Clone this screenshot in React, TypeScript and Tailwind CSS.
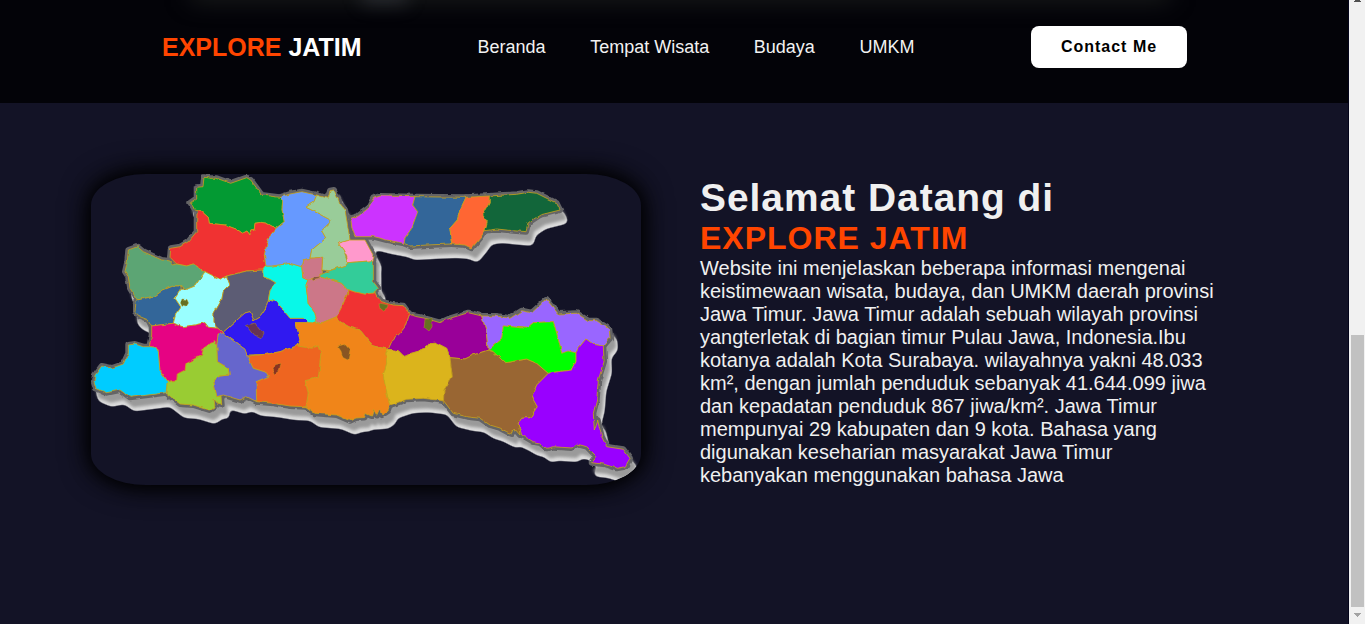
import React from "react";

type Region = { name: string; fill: string; points: string };

const regions: Region[] = [
  { name: "Tuban", fill: "#039a33", points: "190.3,202.7 196.7,198.3 196.7,187.3 203,186.7 204,177.3 210,178.3 216.7,178.3 230.7,183.3 246.7,177.7 250.7,180 261.7,195 279.3,197.3 282.7,200.7 282,209.3 284.3,221.7 276,228.3 266.7,223.3 260.7,222.3 255,223.3 254.3,229.3 250.7,230 250,235 247,231 242.7,233.3 236.7,229.3 225,225 209.3,223.3 208.3,217.3 200.7,210.7 194.3,208.7" },
  { name: "Bojonegoro", fill: "#f03232", points: "200.7,210.7 208.3,217.3 209.3,223.3 225,225 236.7,229.3 242.7,233.3 247,231 250,235 250.7,230 254.3,229.3 255,223.3 260.7,222.3 266.7,223.3 276,228.3 268.3,238.3 264.3,255 266,266 262.7,270 246.7,271 226.7,276 220,279.3 205,271.7 193.3,264 186.7,266 176.7,264 170,257.3 170.7,248.3 180,246.7 188.3,241.7 196.7,231.7 196.7,220 197.3,209.7" },
  { name: "Ngawi", fill: "#5ca574", points: "128.3,250 137.3,246.7 143.3,251.7 161.7,260 170,261 173.3,265 176.7,264 186.7,266 193.3,264 205,271.7 195,286 186.7,289.3 181,286 173.3,286 163.3,290 155,296 137.3,300 130,288.3 128.3,276.7 125,271.7 127.3,261.7" },
  { name: "Magetan", fill: "#336699", points: "137.3,300 155,296 163.3,290 173.3,286 181,286 181,289.3 175,298.3 180.7,306.7 176,313.3 173.3,323.3 151.7,326 148.3,320 140,316.7 135,311.7 136,301.7" },
  { name: "Madiun", fill: "#99ffff", points: "205,271.7 220,279.3 226.7,276 230,285 223.3,291.7 221.7,300 214,313.3 214,321.7 216,326.7 218,328.3 208.3,327.3 205,322.7 195,325 183.3,326.7 173.3,323.3 176,313.3 180.7,306.7 175,298.3 181,289.3 186.7,289.3 195,286" },
  { name: "Nganjuk", fill: "#5c5c74", points: "226.7,276 246.7,271 262.7,270 263.3,276.7 270,279.3 275.7,282.7 270,290.7 268.3,300 265,310 260,317.3 254,320.7 250,311.7 245,313 222.7,332.7 218,328.3 216,326.7 214,321.7 214,313.3 221.7,300 223.3,291.7 230,285" },
  { name: "Kediri", fill: "#3019f0", points: "222.7,332.7 245,313 250,311.7 254,320.7 260,317.3 265,310 268.3,300 276.7,301.7 290,318.3 303.3,318.3 308.3,322.7 296,322.7 300,340 296.7,346 280,351.7 266.7,354.3 246.7,355 245,349.3 230,338.3" },
  { name: "Jombang", fill: "#08f8e8", points: "263.3,276.7 262.7,270 266,266 271.7,266 290,263.3 301.7,266.7 302.7,276.7 308.3,279.3 306,285 308.3,303.3 315,313.3 317.3,323.3 308.3,322.7 303.3,318.3 290,318.3 276.7,301.7 268.3,300 270,290.7 275.7,282.7 270,279.3" },
  { name: "Lamongan", fill: "#6699ff", points: "279.3,197.3 290,194 301.7,191.7 316.7,195 314,201.7 306,207.3 315,211.7 331.7,220.7 321.7,230.7 326,238.3 311.7,250 310,258.3 302.7,260 301.7,266.7 290,263.3 271.7,266 266,266 264.3,255 268.3,238.3 276,228.3 284.3,221.7 282,209.3 282.7,200.7" },
  { name: "Gresik", fill: "#99cc99", points: "316.7,195 320,196 328.3,198.3 330,190.7 334,190 340,203.3 345,210 347.3,223.3 350,240 338.3,243.3 343.3,250 347.7,262.7 346.7,265 330,270.7 321.7,270 322.7,257.3 310,258.3 311.7,250 326,238.3 321.7,230.7 331.7,220.7 315,211.7 306,207.3 314,201.7" },
  { name: "Surabaya", fill: "#ff99cc", points: "338.3,243.3 350,240 365,240 374,256.7 372.7,260.7 347.7,262.7 346.7,256.7 343.3,250" },
  { name: "Kota Mojokerto", fill: "#cc7788", points: "310,258.3 322.7,257.3 321.7,270 322.7,272 320,277.3 308.3,279.3 302.7,276.7 301.7,266.7 302.7,260" },
  { name: "Mojokerto", fill: "#cc7788", points: "306,285 308.3,279.3 320,277.3 330,279.3 341.7,283.3 347.7,290 347.7,293.3 342.7,305 336.7,316.7 323.3,322.3 317.3,323.3 315,313.3 308.3,303.3" },
  { name: "Sidoarjo", fill: "#33cc99", points: "320,275 330,270.7 346.7,265 347.7,262.7 372.7,260.7 373.3,263.3 373.3,281.7 378.3,288.3 375,292.7 365,294.3 347.7,290 341.7,283.3 330,279.3 320,277.3" },
  { name: "Pasuruan", fill: "#f03232", points: "347.7,290 365,294.3 375,292.7 376.7,296 381.7,301.7 393.3,305 403.3,305.7 409.3,314 405,326.7 400,333.3 391.7,341.7 388.3,349.3 373.3,346 366.7,338.3 360,330 350,327.3 340,321.7 336.7,316.7 342.7,305 347.7,293.3" },
  { name: "Malang", fill: "#f08519", points: "296,322.7 308.3,322.7 317.3,323.3 323.3,322.3 336.7,316.7 340,321.7 350,327.3 360,330 366.7,338.3 373.3,346 388.3,349.3 386,353.3 386.7,363.3 383.3,375 386,390 390,405 388,411 382,415 379.5,410 377,415.5 373.5,409.5 371.5,416 366,413.5 364.5,417.5 356,418 350,420.7 336.7,415 315,413.3 306,406.7 308.3,393.3 305,380.7 318.3,377.3 321,353.3 318.3,346 311.7,348.3 296.7,346 300,340" },
  { name: "Blitar", fill: "#ee6520", points: "296.7,346 311.7,348.3 318.3,346 321,353.3 318.3,377.3 305,380.7 308.3,393.3 306,406.7 290,406 273.3,403.3 256.7,401.7 256,381.7 269.3,376 267.3,372.7 253.3,368.3 247.3,356 266.7,354.3 280,351.7" },
  { name: "Tulungagung", fill: "#6666cc", points: "222.7,332.7 230,338.3 245,349.3 247.3,356 253.3,368.3 267.3,372.7 269.3,376 256,381.7 256.7,401.7 246.7,396.7 240,400 223.3,395 216.7,396.7 213.3,380 220,376 229,375 228.3,368.3 217.3,361.7 216.7,345 218,334" },
  { name: "Trenggalek", fill: "#99cc33", points: "213.3,341.7 216.7,345 217.3,361.7 228.3,368.3 229,375 220,376 213.3,380 216.7,396.7 221,396 221.7,405 217,404 213,399 214,407 209.3,410 193.3,405 180,404 170.7,396.7 166,392.7 167.3,381.7 176.7,380 177.3,374 185,370 186,363.3 201.7,355 203.3,348.3" },
  { name: "Ponorogo", fill: "#e60383", points: "151.7,326 173.3,323.3 183.3,326.7 195,325 205,322.7 208.3,327.3 218,328.3 222.7,332.7 218,334 216.7,345 213.3,341.7 203.3,348.3 201.7,355 186,363.3 185,370 177.3,374 176.7,380 167.3,381.7 160,371.7 158.3,351.7 156,347.3 149.3,346.7 151.7,335" },
  { name: "Pacitan", fill: "#00ccff", points: "95,375 101.7,366 112,368 123.3,364 128.3,353.3 128.3,345 135,344 143.3,346.7 149.3,346.7 156,347.3 158.3,351.7 160,371.7 167.3,381.7 166,392.7 148,395 130,397.3 120,390 106.7,392.7 96,388.3 94,381.7" },
  { name: "Bangkalan", fill: "#cc33ff", points: "350.7,218.3 358.3,216 368.3,208.3 373.3,198.3 380,196 415,196.7 412.7,205 417.7,211.7 411.7,228.3 405,238 404,243.3 386.7,240 373.3,236.7 355,236.7 352,228" },
  { name: "Sampang", fill: "#336699", points: "415,196.7 466,197.3 460,210 457.3,220 450,228.3 451.7,244 433,244.7 410,246 404,243.3 405,238 411.7,228.3 417.7,211.7 412.7,205" },
  { name: "Pamekasan", fill: "#ff6633", points: "466,197.3 489.3,196 489.3,203 482.7,215 487.3,221.7 485,230.7 480,238.3 471.7,248.3 465,245 451.7,244 450,228.3 457.3,220 460,210" },
  { name: "Sumenep", fill: "#12663a", points: "489.3,196 516.7,194.3 528.3,192.3 536.7,193.3 556.7,203.3 560,210 540,215 528.3,222.7 526,231.7 513.3,230.7 496.7,229 485,230.7 487.3,221.7 482.7,215 489.3,203" },
  { name: "Probolinggo", fill: "#990099", points: "409.3,314 413.3,316 425,318.3 440,322.7 450,318.3 468.3,312.7 481.7,316 486,330 488.3,350 473.3,355 465,359 450,357.7 446.7,348.3 435,342.3 430,342.7 425,349.3 403.3,355.7 398.3,350.7 388.3,349.3 391.7,341.7 400,333.3 405,326.7" },
  { name: "Lumajang", fill: "#dbb41c", points: "388.3,349.3 398.3,350.7 403.3,355.7 425,349.3 430,342.7 435,342.3 446.7,348.3 450,357.7 452.3,376.7 444,390 443.5,400.7 423.3,398.3 406.7,399.3 395,403.3 390,405 386,390 383.3,375 386.7,363.3 386,353.3" },
  { name: "Jember", fill: "#996633", points: "450,357.7 465,359 473.3,355 488.3,350 493.3,351.7 505,362.7 526.7,359 536.7,363.3 548.3,373.3 536.7,385 531.7,396.7 537.3,406.7 530,417.7 521.7,418.3 518.3,423.3 520,435 514,428 512,434 506.7,431.7 500,428 490,425 480,418.3 466.7,416.7 453.3,413.3 443.5,400.7 444,390 452.3,376.7" },
  { name: "Situbondo", fill: "#9966ff", points: "481.7,316 496.7,316 510,318.3 521.7,310.7 531.7,312.7 546.7,299.3 558.3,314 576.7,313.3 588.3,320.7 596.7,320.7 609.3,329.3 610,338.3 603.3,346 593.3,344.3 586,339 578.3,348.3 576,352.7 561.7,353.3 556.7,333.3 553.3,321.7 533.3,322.7 526.7,328.3 503.3,326 501.7,339.3 488.3,350 486,330" },
  { name: "Bondowoso", fill: "#00ff00", points: "488.3,350 501.7,339.3 503.3,326 526.7,328.3 533.3,322.7 553.3,321.7 556.7,333.3 561.7,353.3 568,351 576,352.7 576,361.7 571.7,370 558.3,371.7 548.3,373.3 536.7,363.3 526.7,359 505,362.7 493.3,351.7" },
  { name: "Banyuwangi", fill: "#9900ff", points: "548.3,373.3 558.3,371.7 571.7,370 576,361.7 576,352.7 578.3,348.3 586,339 593.3,344.3 603.3,346 604,361.7 598.3,380 596.7,400 593.3,413.3 594.3,430 597.7,420 601.7,436.7 606.7,446.7 623.3,449.3 630,458.3 625,466.7 616.7,468.3 603.3,464 591.7,462.7 596.7,456.7 586.7,446.7 576.7,444 572,448 553.3,446.7 546.7,448.3 540,443 533.3,441.7 521.7,435 518.3,423.3 521.7,418.3 530,417.7 537.3,406.7 531.7,396.7 536.7,385" },
];

const cities: Region[] = [
  { name: "Kota Madiun", fill: "#667022", points: "182,299 187,299.5 188.5,303 186,307 182,306 180.5,303" },
  { name: "Kota Kediri", fill: "#663355", points: "246.5,325 255,323 259,329 264,333 261.5,338 253,333.5" },
  { name: "Kota Blitar", fill: "#883322", points: "281,363.5 276,364.5 272,368.3 274.5,374 279.5,370.5" },
  { name: "Kota Malang", fill: "#885522", points: "337.5,346 345,344.5 350,350 348,360 343,357.5 341,351" },
  { name: "Kota Pasuruan", fill: "#667022", points: "379,303 384,304 388,305 387,309 383.5,311 380,308" },
  { name: "Kota Probolinggo", fill: "#667022", points: "425,319 432,319 432,327 429,331 424,327" },
  { name: "Mojokerto Kota", fill: "#885544", points: "312,279 314,277.5 320,276.5 319,279 313,280.5" },
];

function JatimMap() {
  return (
    <svg viewBox="91 174 550 311" className="block h-full w-full" role="img" aria-label="Peta Jawa Timur">
      <defs>
        <filter id="coast" filterUnits="userSpaceOnUse" x="91" y="174" width="550" height="311" colorInterpolationFilters="sRGB">
          <feTurbulence type="fractalNoise" baseFrequency="0.17" numOctaves="1" seed="4" result="n" />
          <feDisplacementMap in="SourceGraphic" in2="n" scale="3.5" xChannelSelector="R" yChannelSelector="G" />
        </filter>
        <filter id="round" filterUnits="userSpaceOnUse" x="80" y="164" width="570" height="330" colorInterpolationFilters="sRGB">
          <feGaussianBlur stdDeviation="2.6" />
          <feComponentTransfer>
            <feFuncA type="linear" slope="5" intercept="-2" />
          </feComponentTransfer>
        </filter>
        <filter id="soft" filterUnits="userSpaceOnUse" x="80" y="164" width="570" height="330" colorInterpolationFilters="sRGB">
          <feGaussianBlur stdDeviation="1.8" />
        </filter>
        <g id="land" strokeLinejoin="round">
          {regions.map((r) => (
            <polygon key={r.name} points={r.points} />
          ))}
        </g>
      </defs>
      <g filter="url(#round)">
        <use href="#land" x="5" y="11" fill="#dcdcdc" stroke="#dcdcdc" strokeWidth="6" />
      </g>
      <g filter="url(#soft)">
        <use href="#land" x="4" y="8" fill="#9a9a9a" stroke="#9a9a9a" strokeWidth="4" />
      </g>
      <g filter="url(#coast)">
        <use href="#land" fill="#646466" stroke="#646466" strokeWidth="6" />
        <path d="M347 222 L354 230 L349 240 L354 242 L362 238" fill="none" stroke="#646466" strokeWidth="3" />
        <g stroke="#c9a31b" strokeWidth="0.8" strokeLinejoin="round">
          {regions.map((r) => (
            <polygon key={r.name} points={r.points} fill={r.fill} />
          ))}
          {cities.map((r) => (
            <polygon key={r.name} points={r.points} fill={r.fill} strokeOpacity="0.5" />
          ))}
        </g>
      </g>
    </svg>
  );
}

const links = ["Beranda", "Tempat Wisata", "Budaya", "UMKM"];

const paragraph = [
  "Website ini menjelaskan beberapa informasi mengenai",
  "keistimewaan wisata, budaya, dan UMKM daerah provinsi",
  "Jawa Timur. Jawa Timur adalah sebuah wilayah provinsi",
  "yangterletak di bagian timur Pulau Jawa, Indonesia.Ibu",
  "kotanya adalah Kota Surabaya. wilayahnya yakni 48.033",
  "km², dengan jumlah penduduk sebanyak 41.644.099 jiwa",
  "dan kepadatan penduduk 867 jiwa/km². Jawa Timur",
  "mempunyai 29 kabupaten dan 9 kota. Bahasa yang",
  "digunakan keseharian masyarakat Jawa Timur",
  "kebanyakan menggunakan bahasa Jawa",
];

function Header() {
  return (
    <header className="relative flex h-[103px] items-start overflow-hidden bg-[#030308] pl-[162px]">
      <div className="absolute -top-4 left-[190px] h-4 w-[980px] bg-[#30352f]/60 blur-[12px]" />
      <div className="absolute -top-4 left-[362px] h-5 w-[45px] bg-[#50555c]/40 blur-[9px]" />
      <div className="relative mt-[33px] w-[315.5px] text-[25px] leading-[29px] font-bold text-white">
        <span className="text-[#ff4500]">EXPLORE</span> JATIM
      </div>
      <nav className="relative mt-[37px] flex w-[553.5px] gap-[44.6px] text-[18px] leading-[21px] whitespace-nowrap text-[#f2f2f2]">
        {links.map((l) => (
          <a key={l}>{l}</a>
        ))}
      </nav>
      <button className="relative mt-[26px] h-[42px] w-[156px] rounded-[8px] bg-white text-[16px] leading-[18px] font-bold tracking-[1px] text-black">
        Contact Me
      </button>
    </header>
  );
}

function Scrollbar() {
  return (
    <div className="flex h-full w-4 shrink-0 flex-col items-center bg-[#f1f1f1]">
      <svg className="h-[335px] w-4 shrink-0" viewBox="0 0 16 335">
        <path d="M6 0h5v1h1v1H5V1h1z" fill="#505050" />
      </svg>
      <div className="ml-px h-[272px] w-[13px] bg-[#c1c1c1]" />
      <svg className="h-[17px] w-4" viewBox="0 0 16 17">
        <path d="M5 6h7v1h-1v1h-1v1H9v1H8V9H7V8H6V7H5z" fill="#a3a3a3" />
      </svg>
    </div>
  );
}

export default function App() {
  return (
    <div className="flex h-[624px] w-full overflow-hidden bg-[#131326] font-['Liberation_Sans',Arial,sans-serif]">
      <div className="h-full min-w-0 flex-1 border-r border-[#04041a]">
        <Header />
        <main className="flex pt-[71px] pl-[91px]">
          <div className="h-[311px] w-[550px] shrink-0 overflow-hidden rounded-[10%] bg-[#131326] shadow-[0_0_30px_#000,0_0_20px_#000]">
            <JatimMap />
          </div>
          <section className="ml-[59px] whitespace-nowrap text-[#f0f0f0]">
            <h1 className="pt-px text-[38.9px] leading-[46px] font-bold tracking-[1px]">Selamat Datang di</h1>
            <h2 className="pb-[2px] text-[32px] leading-[34px] font-bold tracking-[1px] text-[#ff4500]">EXPLORE JATIM</h2>
            <p className="text-[20px] leading-[23px]">
              {paragraph.map((line) => (
                <span key={line} className="block">
                  {line}
                </span>
              ))}
            </p>
          </section>
        </main>
      </div>
      <Scrollbar />
    </div>
  );
}
